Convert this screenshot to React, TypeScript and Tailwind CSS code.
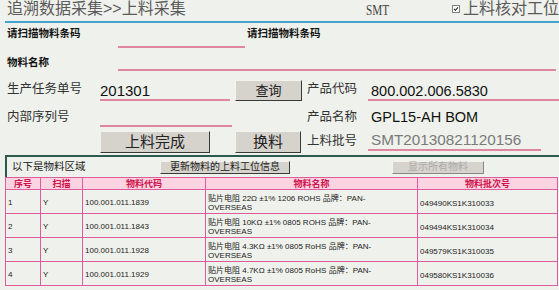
import React from "react";

const LINE = "border-b-2 border-[#e1869f]";

function RaisedButton({ children, className = "" }: { children: React.ReactNode; className?: string }) {
  return (
    <div
      className={
        "flex items-center justify-center bg-[#d6d3cd] border border-t-[#f4f2ee] border-l-[#f4f2ee] border-r-[#3a3a3a] border-b-[#3a3a3a] text-[#222] " +
        className
      }
    >
      {children}
    </div>
  );
}

const rows = [
  { no: "1", scan: "Y", code: "100.001.011.1839", name1: "贴片电阻 22Ω ±1% 1206 ROHS 品牌：PAN-", batch: "049490KS1K310033" },
  { no: "2", scan: "Y", code: "100.001.011.1843", name1: "贴片电阻 10KΩ ±1% 0805 ROHS 品牌：PAN-", batch: "049494KS1K310034" },
  { no: "3", scan: "Y", code: "100.001.011.1928", name1: "贴片电阻 4.3KΩ ±1% 0805 RoHS 品牌：PAN-", batch: "049579KS1K310035" },
  { no: "4", scan: "Y", code: "100.001.011.1929", name1: "贴片电阻 4.7KΩ ±1% 0805 RoHS 品牌：PAN-", batch: "049580KS1K310036" },
];

export default function App() {
  return (
    <div className="w-[559px] h-[290px] overflow-hidden bg-[#eff1ec] font-['Liberation_Sans','Noto_Sans_CJK_SC',sans-serif] text-[#222]">
      {/* header */}
      <div className="flex h-[21px] items-center">
        <div className="w-[370px] pl-[7px] pb-[3px] text-[16px] leading-[18px] text-[#5a5a5a] whitespace-nowrap">
          追溯数据采集&gt;&gt;上料采集
        </div>
        <div className="w-[87px] pb-[2px]">
          <span className="inline-block origin-left scale-x-75 font-['Liberation_Serif',serif] text-[15px] leading-[18px] text-[#444]">
            SMT
          </span>
        </div>
        <div className="flex items-center whitespace-nowrap pb-[3px]">
          <svg width="8" height="8" viewBox="0 0 8 8" className="block">
            <rect x="0.5" y="0.5" width="7" height="7" fill="#fff" stroke="#808080" />
            <path d="M2 3.8 L3.4 5.3 L6 2.4" stroke="#222" strokeWidth="1.1" fill="none" />
          </svg>
          <span className="ml-[3px] text-[16px] leading-[18px] text-[#5a5a5a]">上料核对工位</span>
        </div>
      </div>
      <div className="ml-[5px] h-[2px] bg-[#43a5cd]" />

      {/* row A */}
      <div className="flex items-start h-[27px]">
        <div className="w-[118px] pl-[7px] pt-[3px] text-[10.5px] leading-[14px] font-bold text-[#111]">请扫描物料条码</div>
        <div className={"w-[127px] mt-[5px] h-[20px] " + LINE} />
        <div className="ml-[2px] pt-[3px] text-[10.5px] leading-[14px] font-bold text-[#111]">请扫描物料条码</div>
      </div>

      {/* row B */}
      <div className="flex items-start h-[24px]">
        <div className="w-[118px] pl-[7px] pt-[5px] text-[10.5px] leading-[14px] font-bold text-[#111]">物料名称</div>
        <div className={"w-[438px] mt-[1px] h-[20px] " + LINE} />
      </div>

      {/* row C */}
      <div className="flex items-start h-[30px]">
        <div className="w-[100px] pl-[7px] pt-[7px] text-[12.5px] leading-[16px] text-[#333] whitespace-nowrap">生产任务单号</div>
        <div className={"w-[130px] mt-[7px] h-[20px] text-[15px] leading-[20px] text-[#111] " + LINE}>201301</div>
        <RaisedButton className="ml-[5px] w-[67px] mt-[6px] h-[21px] text-[13px]">查询</RaisedButton>
        <div className="ml-[5px] w-[61px] pt-[7px] text-[12.5px] leading-[16px] text-[#333]">产品代码</div>
        <div className={"w-[191px] mt-[7px] h-[20px] pl-[3px] text-[14.5px] leading-[20px] text-[#111] " + LINE}>800.002.006.5830</div>
      </div>

      {/* row D */}
      <div className="flex items-start h-[24px]">
        <div className="w-[100px] pl-[7px] pt-[5px] text-[12.5px] leading-[16px] text-[#333] whitespace-nowrap">内部序列号</div>
        <div className={"w-[132px] mt-[3px] h-[20px] " + LINE} />
        <div className="ml-[75px] w-[61px] pt-[5px] text-[12.5px] leading-[16px] text-[#333]">产品名称</div>
        <div className="pl-[3px] pt-[3px] text-[14.5px] leading-[20px] text-[#111]">GPL15-AH BOM</div>
      </div>

      {/* row E */}
      <div className="flex items-start h-[27px]">
        <RaisedButton className="ml-[100px] w-[110px] mt-[3px] h-[22px] text-[15px]">上料完成</RaisedButton>
        <RaisedButton className="ml-[25px] w-[66px] mt-[3px] h-[22px] text-[15px]">换料</RaisedButton>
        <div className="ml-[6px] w-[61px] pt-[5px] text-[12.5px] leading-[16px] text-[#333]">上料批号</div>
        <div className={"w-[173px] mt-[2px] h-[21px] pl-[3px] text-[15.3px] leading-[20px] text-[#7a7a7a] " + LINE}>SMT20130821120156</div>
      </div>

      {/* toolbar */}
      <div className="ml-[5px] w-[556px] h-[22px] border-t-2 border-l-2 border-[#2d5a4d] flex items-center">
        <div className="w-[153px] pl-[5px] text-[10.5px] text-[#222]">以下是物料区域</div>
        <RaisedButton className="w-[130px] h-[13px] text-[10px] leading-[12px]">更新物料的上料工位信息</RaisedButton>
        <RaisedButton className="ml-[102px] w-[92px] h-[13px] text-[10px] leading-[12px] !text-[#aaa] !border-r-[#888] !border-b-[#888]">显示所有物料</RaisedButton>
      </div>

      {/* table */}
      <table className="ml-[5px] w-[552px] border-collapse table-fixed text-[8px] leading-[9px]">
        <colgroup>
          <col className="w-[35px]" />
          <col className="w-[42px]" />
          <col className="w-[123px]" />
          <col className="w-[212px]" />
          <col className="w-[140px]" />
        </colgroup>
        <thead>
          <tr className="h-[12px] bg-[#fbd3e1]">
            {["序号", "扫描", "物料代码", "物料名称", "物料批次号"].map((h) => (
              <th key={h} className="border border-[#dc5c9c] p-0 text-center text-[9px] leading-[10px] font-bold text-[#d0124c]">
                {h}
              </th>
            ))}
          </tr>
        </thead>
        <tbody>
          {rows.map((r) => (
            <tr key={r.no} className="h-[24px]">
              <td className="border border-[#dc5c9c] pl-[2px] pt-[2px] align-middle">{r.no}</td>
              <td className="border border-[#dc5c9c] pl-[2px] pt-[2px] align-middle">{r.scan}</td>
              <td className="border border-[#dc5c9c] pl-[2px] pt-[2px] align-middle">{r.code}</td>
              <td className="border border-[#dc5c9c] pl-[2px] pt-[2px] align-middle whitespace-nowrap">
                {r.name1}
                <br />
                OVERSEAS
              </td>
              <td className="border border-[#dc5c9c] pl-[2px] pt-[3px] align-middle">{r.batch}</td>
            </tr>
          ))}
        </tbody>
      </table>
    </div>
  );
}
